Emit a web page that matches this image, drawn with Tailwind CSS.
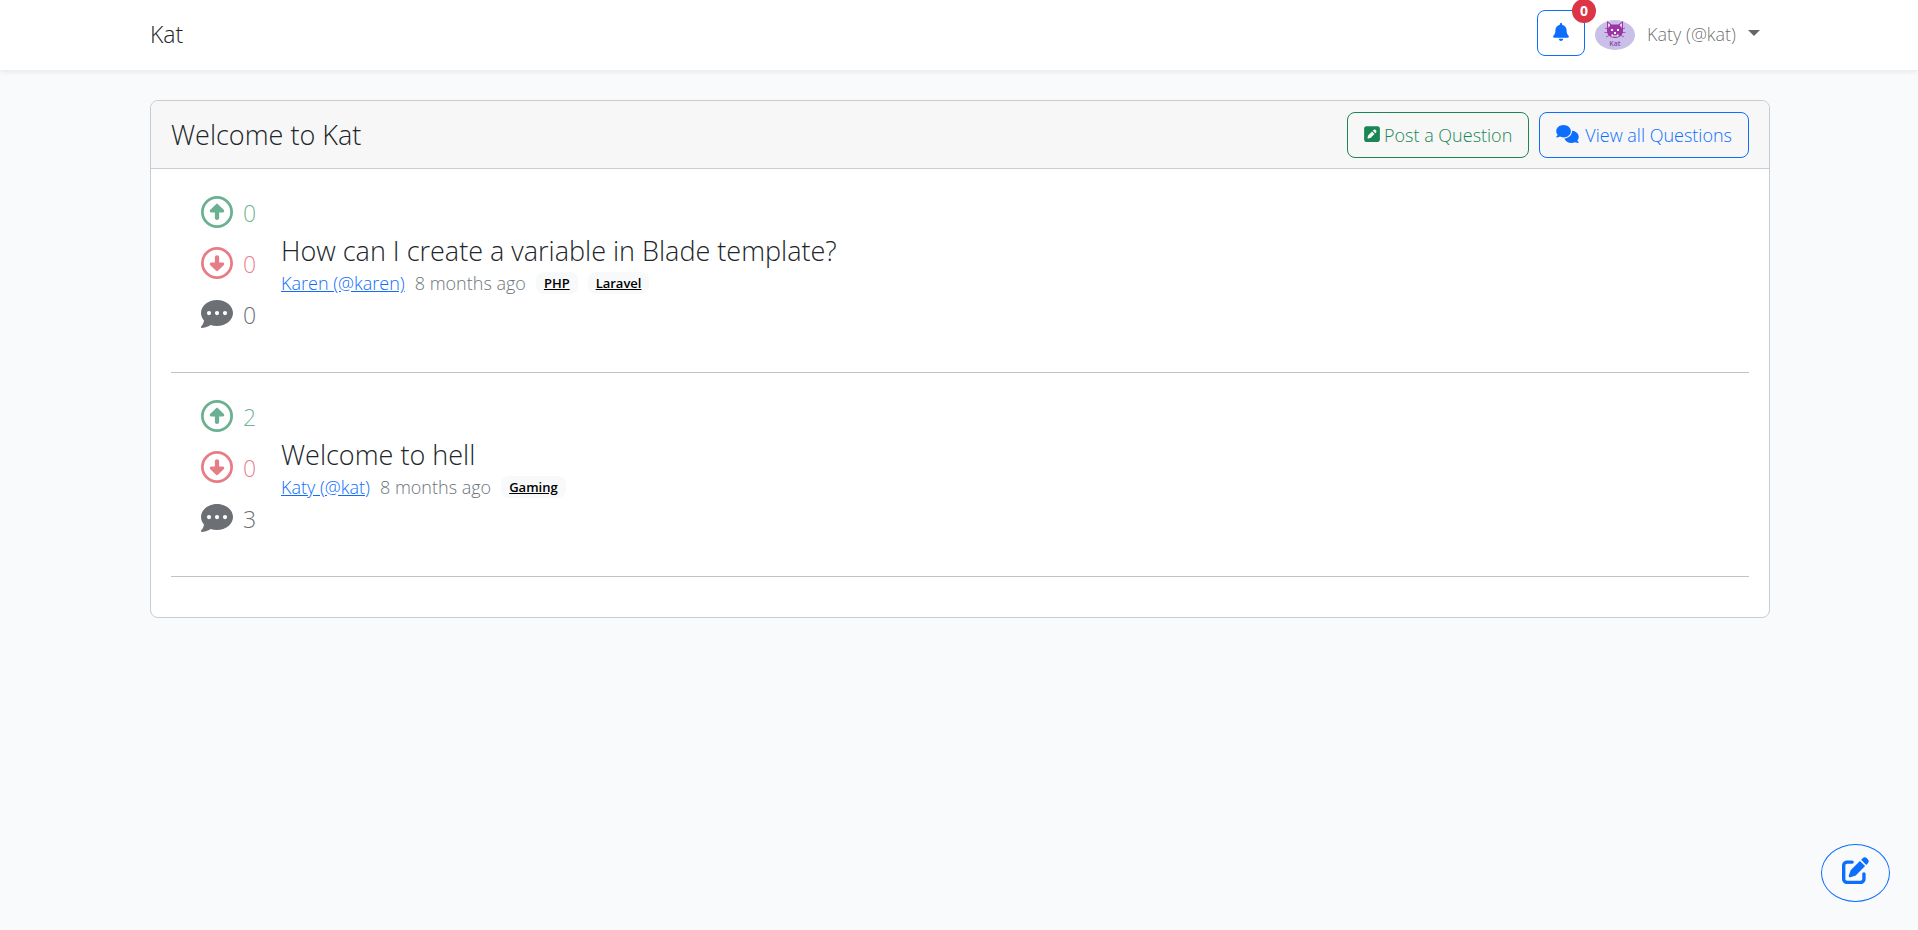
<!DOCTYPE html>
<html lang="en">
<head>
    <meta charset="UTF-8">
    <meta name="viewport" content="width=device-width, initial-scale=1.0">
    <title>Kat</title>
    <script src="https://cdn.jsdelivr.net/npm/@tailwindcss/browser@4"></script>
</head>
<body class="min-h-screen bg-[#f8fafc] font-['Open_Sans',sans-serif] font-light text-lg leading-7 text-[#212529]">
    <!-- icons -->
    <svg class="hidden">
        <symbol id="arrow-up" viewBox="0 0 512 512">
            <circle cx="256" cy="256" r="234" fill="none" stroke="currentColor" stroke-width="44"/>
            <path d="M241 131c8-8 22-8 30 0l92 90c16 15 7 43-14 43h-59v86c0 18-14 32-34 32s-34-14-34-32v-86h-59c-21 0-30-28-14-43z"/>
        </symbol>
        <symbol id="arrow-down" viewBox="0 0 512 512">
            <circle cx="256" cy="256" r="234" fill="none" stroke="currentColor" stroke-width="44"/>
            <path d="M241 381c8 8 22 8 30 0l92-90c16-15 7-43-14-43h-59v-86c0-18-14-32-34-32s-34 14-34 32v86h-59c-21 0-30 28-14 43z"/>
        </symbol>
        <symbol id="comment" viewBox="0 0 512 512">
            <path d="M512 240c0 114.9-114.6 208-256 208c-37.1 0-72.3-6.4-104.1-17.9c-11.9 8.7-31.3 20.6-54.3 30.6C73.6 471.1 44.7 480 16 480c-6.5 0-12.3-3.9-14.8-9.9c-2.5-6-1.1-12.8 3.4-17.4l.3-.3c.3-.3 .7-.7 1.3-1.4c1.1-1.2 2.8-3.1 4.9-5.7c4.1-5 9.6-12.4 15.2-21.6c10-16.6 19.5-38.4 21.4-62.9C17.7 326.8 0 285.1 0 240C0 125.1 114.6 32 256 32s256 93.1 256 208z"/>
            <g fill="#fff"><circle cx="128" cy="240" r="34"/><circle cx="256" cy="240" r="34"/><circle cx="384" cy="240" r="34"/></g>
        </symbol>
    </svg>

    <nav class="bg-white shadow-[0_2px_5px_rgba(0,0,0,0.075)]">
        <div class="mx-auto flex h-[70px] max-w-[1650px] items-center justify-between pr-3.5 pl-4">
            <a href="#" class="mb-0.5 text-[23px]">Kat</a>
            <div class="flex items-center gap-2.5 pr-2.5">
                <button type="button" aria-label="Notifications" class="relative mb-1 flex h-[46px] w-12 items-center justify-center rounded-lg border border-[#0d6efd] text-[#0d6efd]">
                    <svg class="mb-0.5 h-[18px] w-4 fill-current" viewBox="0 0 448 512"><path d="M224 0c-17.7 0-32 14.3-32 32V51.2C119 66 64 130.6 64 208v18.8c0 47-17.3 92.4-48.5 127.6l-7.4 8.3c-8.4 9.4-10.4 22.9-5.3 34.4S19.4 416 32 416H416c12.6 0 24-7.4 29.2-18.9s3.1-25-5.3-34.4l-7.4-8.3C401.3 319.2 384 273.9 384 226.8V208c0-77.4-55-142-128-156.8V32c0-17.7-14.3-32-32-32zm45.3 493.3c12-12 18.7-28.3 18.7-45.3H224 160c0 17 6.7 33.3 18.7 45.3s28.3 18.7 45.3 18.7s33.3-6.7 45.3-18.7z"/></svg>
                    <span class="absolute -top-3 -right-3 flex h-6 w-6 items-center justify-center rounded-full bg-[#dc3545] text-sm font-bold text-white">0</span>
                </button>
                <button type="button" class="flex items-center gap-3 text-black/60">
                    <svg class="h-[30px] w-10" viewBox="0 0 40 30">
                        <ellipse cx="20" cy="15" rx="20" ry="15" fill="#cabfe8"/>
                        <path fill="none" stroke="#9c5fb8" d="M10 8l5 2M9.500 12.500h6M11 17l4-2M30 8l-5 2M30.500 12.500h-6M29 17l-4-2"/>
                        <path fill="#9c36a5" d="M12 1l4.500 3.500h7L28 1v10c0 4-3.500 7-8 7s-8-3-8-7z"/>
                        <path fill="#fff" d="M13 3l2.200 2-1.700 3zM27 3l-2.200 2 1.700 3zM16 9h2v2h-2zM22 9h2v2h-2zM19 12h2v2h-2zM16.500 14.500H18v1h4v-1h1.500v2h-7z"/>
                        <text x="20" y="26" text-anchor="middle" font-size="7" font-weight="600" fill="#8a45a8">Kat</text>
                    </svg>
                    <span class="mb-0.5">Katy (@kat)</span>
                    <span class="mb-1 border-x-[6px] border-t-[6px] border-x-transparent border-t-current"></span>
                </button>
            </div>
        </div>
    </nav>

    <main class="mx-auto max-w-[1650px] py-[30px] pr-3.5 pl-4">
        <section class="rounded-lg border border-[#c9cccf] bg-white">
            <header class="flex h-[68px] items-center justify-between rounded-t-lg border-b border-[#c9cccf] bg-[#f7f7f7] px-5">
                <h1 class="text-[27px] leading-8">Welcome to Kat</h1>
                <div class="flex gap-2.5">
                    <a href="#" class="flex h-[46px] items-center gap-1 rounded-lg border border-[#198754] px-4 text-[#198754]">
                        <svg class="mb-0.5 h-[18px] w-4 fill-current" viewBox="0 0 448 512"><path d="M64 32C28.7 32 0 60.7 0 96V416c0 35.3 28.7 64 64 64H384c35.3 0 64-28.7 64-64V96c0-35.3-28.7-64-64-64H64zM325.8 139.7l14.4 14.4c15.6 15.6 15.6 40.9 0 56.6l-21.4 21.4-71-71 21.4-21.4c15.6-15.6 40.9-15.6 56.6 0zM119.9 289L225.1 183.8l71 71L190.9 359.9c-4.1 4.1-9.2 7-14.9 8.4l-60.1 15c-5.5 1.4-11.2-.2-15.2-4.2s-5.6-9.7-4.2-15.2l15-60.1c1.4-5.6 4.3-10.8 8.4-14.9z"/></svg>
                        Post a Question
                    </a>
                    <a href="#" class="flex h-[46px] items-center gap-1.5 rounded-lg border border-[#0d6efd] px-4 text-[#0d6efd]">
                        <svg class="mb-0.5 h-[18px] w-[23px] fill-current" viewBox="0 0 640 512"><path d="M208 352c114.9 0 208-78.8 208-176S322.9 0 208 0S0 78.8 0 176c0 38.6 14.7 74.3 39.6 103.4c-3.5 9.4-8.7 17.7-14.2 24.7c-4.8 6.2-9.7 11-13.3 14.3c-1.8 1.6-3.3 2.9-4.3 3.7c-.5 .4-.9 .7-1.1 .8l-.2 .2C1 327.2-1.4 334.4 .8 340.9S9.1 352 16 352c21.8 0 43.8-5.6 62.1-12.5c9.2-3.5 17.8-7.4 25.2-11.4C134.1 343.3 169.8 352 208 352zM448 176c0 112.3-99.1 196.9-216.5 207C255.8 457.4 336.4 512 432 512c38.2 0 73.9-8.7 104.7-23.9c7.5 4 16 7.9 25.2 11.4c18.3 6.9 40.3 12.5 62.1 12.5c6.9 0 13.1-4.5 15.2-11.1c2.1-6.6-.2-13.8-5.8-17.9l-.2-.2c-.2-.2-.6-.4-1.1-.8c-1-.8-2.5-2-4.3-3.7c-3.6-3.3-8.5-8.1-13.3-14.3c-5.5-7-10.7-15.4-14.2-24.7c24.9-29 39.6-64.7 39.6-103.4c0-92.8-84.9-168.9-192.6-175.5c.4 5.1 .6 10.3 .6 15.5z"/></svg>
                        View all Questions
                    </a>
                </div>
            </header>

            <div class="p-5">
                <article class="mb-5 flex items-center border-b border-[#c0c2c4] pb-[30px] pl-[30px]">
                    <div class="flex w-20 flex-col gap-[5px] pb-[5px] text-[23px]">
                        <button type="button" class="flex h-[46px] items-center gap-2.5 text-[#198754]/65"><svg class="h-8 w-8 fill-current"><use href="#arrow-up"/></svg><span class="pt-0.5">0</span></button>
                        <button type="button" class="flex h-[46px] items-center gap-2.5 text-[#dc3545]/65"><svg class="h-8 w-8 fill-current"><use href="#arrow-down"/></svg><span class="pt-0.5">0</span></button>
                        <div class="flex h-[46px] items-center gap-2.5 text-[#6c7074]"><svg class="h-8 w-8 fill-current"><use href="#comment"/></svg><span class="pt-0.5">0</span></div>
                    </div>
                    <div>
                        <h2 class="mb-0.5 text-[27px] leading-8"><a href="#">How can I create a variable in Blade template?</a></h2>
                        <div class="flex items-center gap-2.5">
                            <a href="#" class="text-[#0d6efd] underline">Karen (@karen)</a>
                            <span class="text-[#6c757d]">8 months ago</span>
                            <a href="#" class="rounded-lg bg-[#f8f9fa] px-2 text-[13px] leading-[22px] font-semibold text-black underline">PHP</a>
                            <a href="#" class="rounded-lg bg-[#f8f9fa] px-2 text-[13px] leading-[22px] font-semibold text-black underline">Laravel</a>
                        </div>
                    </div>
                </article>

                <article class="mb-5 flex items-center border-b border-[#c0c2c4] pb-[30px] pl-[30px]">
                    <div class="flex w-20 flex-col gap-[5px] pb-[5px] text-[23px]">
                        <button type="button" class="flex h-[46px] items-center gap-2.5 text-[#198754]/65"><svg class="h-8 w-8 fill-current"><use href="#arrow-up"/></svg><span class="pt-0.5">2</span></button>
                        <button type="button" class="flex h-[46px] items-center gap-2.5 text-[#dc3545]/65"><svg class="h-8 w-8 fill-current"><use href="#arrow-down"/></svg><span class="pt-0.5">0</span></button>
                        <div class="flex h-[46px] items-center gap-2.5 text-[#6c7074]"><svg class="h-8 w-8 fill-current"><use href="#comment"/></svg><span class="pt-0.5">3</span></div>
                    </div>
                    <div>
                        <h2 class="mb-0.5 text-[27px] leading-8"><a href="#">Welcome to hell</a></h2>
                        <div class="flex items-center gap-2.5">
                            <a href="#" class="text-[#0d6efd] underline">Katy (@kat)</a>
                            <span class="text-[#6c757d]">8 months ago</span>
                            <a href="#" class="rounded-lg bg-[#f8f9fa] px-2 text-[13px] leading-[22px] font-semibold text-black underline">Gaming</a>
                        </div>
                    </div>
                </article>
            </div>
        </section>
    </main>

    <a href="#" aria-label="Post a Question" class="fixed right-7 bottom-7 flex h-[58px] w-[69px] items-center justify-center rounded-[50%] border border-[#0d6efd] text-[#0d6efd]">
        <svg class="mb-1.5 h-[27px] w-[27px] fill-current" viewBox="0 0 512 512"><path d="M471.6 21.7c-21.9-21.9-57.3-21.9-79.2 0L362.3 51.7l97.9 97.9 30.1-30.1c21.9-21.9 21.9-57.3 0-79.2L471.6 21.7zm-299.2 220c-6.1 6.1-10.8 13.6-13.5 21.900l-29.600 88.800c-2.900 8.600-.6 18.100 5.800 24.600s15.900 8.700 24.600 5.800l88.800-29.600c8.200-2.700 15.700-7.400 21.900-13.500L437.7 172.3 339.7 74.3 172.4 241.7zM96 64C43 64 0 107 0 160V416c0 53 43 96 96 96H352c53 0 96-43 96-96V320c0-17.7-14.3-32-32-32s-32 14.3-32 32v96c0 17.7-14.3 32-32 32H96c-17.7 0-32-14.3-32-32V160c0-17.7 14.3-32 32-32h96c17.7 0 32-14.3 32-32s-14.3-32-32-32H96z"/></svg>
    </a>
</body>
</html>
